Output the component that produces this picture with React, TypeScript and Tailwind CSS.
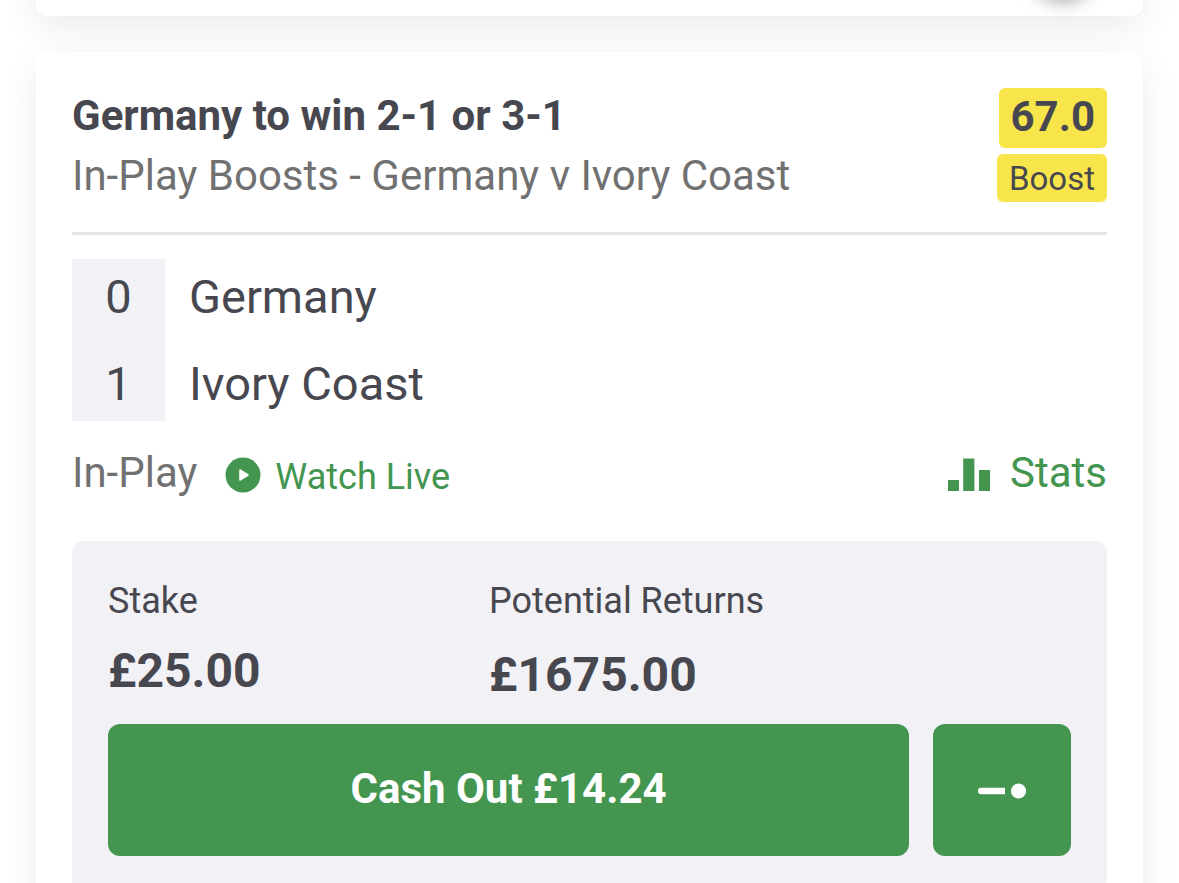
export default function App() {
  return (
    <main className="h-screen overflow-hidden bg-white px-9 font-[Roboto,sans-serif] text-[#474750]">
      <section className="-mt-20 flex h-24 items-start justify-end rounded-b-xl bg-white pr-12 pt-3 shadow-[0_12px_36px_rgba(0,0,0,0.08)]">
        <div className="size-16 rounded-full bg-white shadow-[0_6px_18px_rgba(0,0,0,0.35)]" />
      </section>
      <article className="relative mt-9 rounded-xl bg-white p-9 pb-16 shadow-[0_12px_36px_rgba(0,0,0,0.08)]">
        <header className="flex items-start justify-between border-b-3 border-[#e6e6e6] pb-7">
          <div>
            <h1 className="text-[42px] leading-[56px] font-bold">Germany to win 2-1 or 3-1</h1>
            <p className="mt-1 text-[42px] leading-[56px] text-[#717171]">In-Play Boosts - Germany v Ivory Coast</p>
          </div>
          <div className="flex flex-col items-end gap-[6px]">
            <span className="rounded-md bg-[#f7e54b] px-3 pb-[2px] text-[42px] leading-[58px] font-bold">67.0</span>
            <span className="rounded-md bg-[#f7e54b] px-3 pt-[2px] text-[33px] leading-[46px]">Boost</span>
          </div>
        </header>
        <table className="mt-6 text-left text-[47px] leading-[75px]">
          <tbody>
            <tr className="h-[75px]">
              <td className="w-[93px] bg-[#f2f1f6] text-center">0</td>
              <th className="pl-6 font-normal">Germany</th>
            </tr>
            <tr className="h-[87px]">
              <td className="bg-[#f2f1f6] pt-3 text-center">1</td>
              <th className="pt-3 pl-6 font-normal">Ivory Coast</th>
            </tr>
          </tbody>
        </table>
        <div className="mt-6 flex h-14 items-center text-[42px] leading-[56px]">
          <span className="text-[#717171]">In-Play</span>
          <a href="#watch" className="ml-7 flex items-center gap-[14px] pt-1 text-[36px] text-[#43954f]">
            <svg viewBox="0 0 36 36" className="size-9" aria-hidden="true">
              <circle cx="18" cy="18" r="17.5" fill="currentColor" />
              <path d="M15 13v10l8-5z" fill="white" stroke="white" strokeWidth="1.6" strokeLinejoin="round" />
            </svg>
            <span className="pt-1">Watch Live</span>
          </a>
          <a href="#stats" className="ml-auto flex items-center gap-5 text-[#43954f]">
            <svg viewBox="0 0 43 36" className="h-9 w-[43px]" fill="currentColor" aria-hidden="true">
              <path d="M1 25h11v11H1zM16.2 3.5h11.2v32.5H16.2zM32 15h11v21H32z" />
            </svg>
            Stats
          </a>
        </div>
        <section className="mt-10 rounded-xl bg-[#f2f1f6] p-9">
          <dl className="grid grid-cols-[381px_1fr]">
            <div>
              <dt className="text-[36px] leading-[48px]">Stake</dt>
              <dd className="mt-4 text-[48px] leading-[60px] font-bold">£25.00</dd>
            </div>
            <div>
              <dt className="text-[36px] leading-[48px]">Potential Returns</dt>
              <dd className="mt-5 text-[48px] leading-[60px] font-bold">£1675.00</dd>
            </div>
          </dl>
          <div className="mt-[19px] flex gap-6 text-white">
            <button className="h-33 flex-1 rounded-xl bg-[#43954f] pb-1 text-[42px] font-bold">Cash Out £14.24</button>
            <button aria-label="Partial cash out" className="flex h-33 w-[138px] items-center justify-center rounded-xl bg-[#43954f] pt-[2px]">
              <svg viewBox="0 0 48 16" className="h-4 w-12" fill="currentColor" aria-hidden="true">
                <path d="M3.2 4.8H27v6.4H3.2a3.2 3.2 0 0 1 0-6.4z" />
                <circle cx="40.5" cy="8" r="7.6" />
              </svg>
            </button>
          </div>
        </section>
      </article>
    </main>
  );
}
